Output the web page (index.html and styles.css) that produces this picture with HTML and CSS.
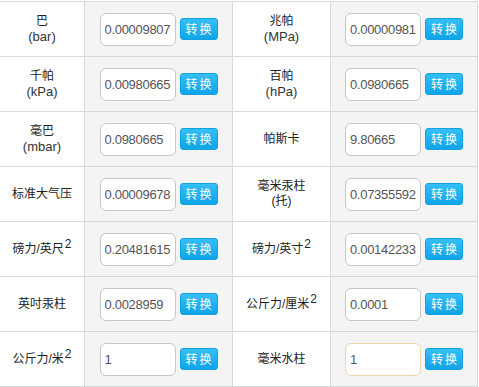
FILE: index.html
```html
<!DOCTYPE html>
<html lang="zh">
<head>
<meta charset="utf-8">
<title>压力单位换算</title>
<link rel="stylesheet" href="styles.css">
</head>
<body>
<div class="grid">
  <div class="lbl"><div class="txt">巴<br><span class="en">(bar)</span></div></div>
  <div class="val"><input class="inp" type="text" value="0.00009807"><button class="btn">转换</button></div>
  <div class="lbl"><div class="txt">兆帕<br><span class="en">(MPa)</span></div></div>
  <div class="val"><input class="inp" type="text" value="0.00000981"><button class="btn">转换</button></div>

  <div class="lbl"><div class="txt">千帕<br><span class="en">(kPa)</span></div></div>
  <div class="val"><input class="inp" type="text" value="0.00980665"><button class="btn">转换</button></div>
  <div class="lbl"><div class="txt">百帕<br><span class="en">(hPa)</span></div></div>
  <div class="val"><input class="inp" type="text" value="0.0980665"><button class="btn">转换</button></div>

  <div class="lbl"><div class="txt">毫巴<br><span class="en">(mbar)</span></div></div>
  <div class="val"><input class="inp" type="text" value="0.0980665"><button class="btn">转换</button></div>
  <div class="lbl"><div class="txt">帕斯卡</div></div>
  <div class="val"><input class="inp" type="text" value="9.80665"><button class="btn">转换</button></div>

  <div class="lbl"><div class="txt">标准大气压</div></div>
  <div class="val"><input class="inp" type="text" value="0.00009678"><button class="btn">转换</button></div>
  <div class="lbl"><div class="txt">毫米汞柱<br>(托)</div></div>
  <div class="val"><input class="inp" type="text" value="0.07355592"><button class="btn">转换</button></div>

  <div class="lbl"><div class="txt">磅力/英尺<sup class="sq">2</sup></div></div>
  <div class="val"><input class="inp" type="text" value="0.20481615"><button class="btn">转换</button></div>
  <div class="lbl"><div class="txt">磅力/英寸<sup class="sq">2</sup></div></div>
  <div class="val"><input class="inp" type="text" value="0.00142233"><button class="btn">转换</button></div>

  <div class="lbl"><div class="txt">英吋汞柱</div></div>
  <div class="val"><input class="inp" type="text" value="0.0028959"><button class="btn">转换</button></div>
  <div class="lbl"><div class="txt">公斤力/厘米<sup class="sq">2</sup></div></div>
  <div class="val"><input class="inp" type="text" value="0.0001"><button class="btn">转换</button></div>

  <div class="lbl"><div class="txt">公斤力/米<sup class="sq">2</sup></div></div>
  <div class="val"><input class="inp" type="text" value="1"><button class="btn">转换</button></div>
  <div class="lbl"><div class="txt">毫米水柱</div></div>
  <div class="val"><input class="inp focus" type="text" value="1"><button class="btn">转换</button></div>
</div>
</body>
</html>
```

FILE: styles.css
```css
html, body {
  margin: 0;
  padding: 0;
  background: #ffffff;
}

body {
  font-family: "Liberation Sans", "Noto Sans CJK SC", sans-serif;
  color: #222;
}

.grid {
  margin-top: 1px;
  width: 478px;
  display: grid;
  grid-template-columns: 84px 147px 97px 146px;
  grid-auto-rows: 54px;
  gap: 1px;
  padding: 1px 1px 1px 0;
  background: #d5dcd5;
  box-sizing: border-box;
}

.lbl {
  background: #ffffff;
  display: flex;
  align-items: center;
  justify-content: center;
}

.txt {
  text-align: center;
  font-size: 12px;
  line-height: 15px;
  color: #222;
  white-space: nowrap;
}

.en {
  font-size: 13px;
  color: #333;
}

.sq {
  font-size: 12px;
  line-height: 0;
  vertical-align: baseline;
  position: relative;
  top: -5px;
  margin-left: 1px;
}

.val {
  background: #f4f4f4;
  display: flex;
  align-items: center;
  justify-content: center;
  gap: 4px;
}

.inp {
  box-sizing: border-box;
  width: 76px;
  height: 33px;
  margin: 0;
  padding: 0 1px 0 4px;
  border: 1px solid #c6c6c6;
  border-radius: 6px;
  background: #fff;
  font-family: "Liberation Sans", sans-serif;
  font-size: 13px;
  letter-spacing: -0.3px;
  color: #555;
  outline: none;
}

.inp.focus {
  border-color: #efd6a8;
}

.btn {
  box-sizing: border-box;
  width: 38px;
  height: 22px;
  margin: 0;
  padding: 0 0 0 2px;
  border: 1px solid #12a2e2;
  border-radius: 3px;
  background: linear-gradient(#35bff6, #0fa4e9);
  color: #fff;
  font-family: "Noto Sans CJK SC", sans-serif;
  font-size: 12px;
  letter-spacing: 2px;
  line-height: 20px;
  text-align: center;
}
```
